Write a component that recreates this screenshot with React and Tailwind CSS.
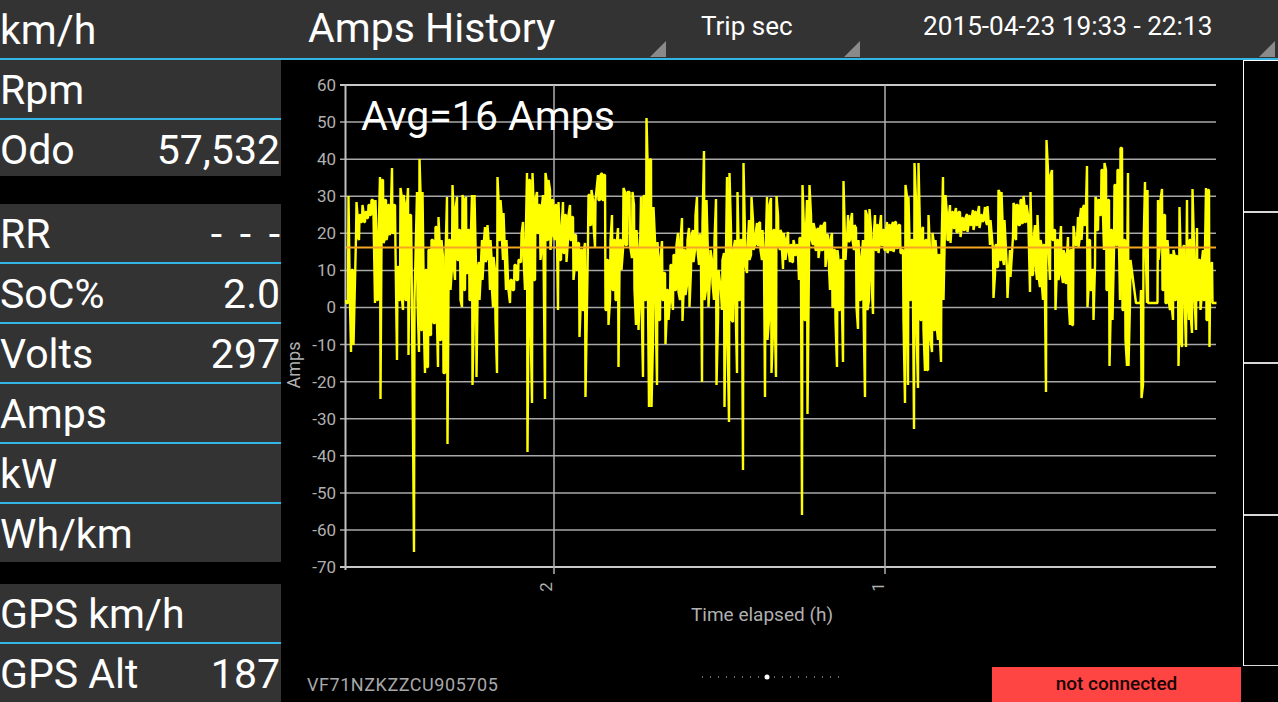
import React from "react";

// traced from the screenshot: [x, top, bottom] in page pixels
const TRACE = [
  [346,300,303],[348,196,303],[351,270,352],[353,270,345],[356,202,237],[359,215,240],[362,205,222],[365,212,222],[368,205,218],[371,200,215],[375,200,303],
  [378,240,300],[380,177,399],[383,180,243],[386,200,240],[389,205,235],[392,168,233],[395,205,250],[397,267,360],[400,188,300],[403,195,310],[405,205,300],[408,188,355],
  [411,215,253],[414,300,552],[417,192,300],[419,159,352],[422,192,330],[425,270,373],[428,250,367],[431,240,335],[435,227,323],[438,217,367],[441,240,340],[443,257,373],
  [447,197,444],[450,240,290],[452,185,267],[455,210,280],[457,197,260],[460,230,300],[462,195,307],[465,200,290],[466,197,273],[469,230,300],[472,195,385],[474,195,310],[476,267,377],
  [479,262,300],[482,240,280],[485,227,262],[487,225,258],[490,240,290],[493,257,307],[495,270,320],[497,177,373],[500,200,240],[503,213,260],[506,240,290],[510,280,303],
  [514,265,290],[518,260,280],[521,235,262],[523,222,255],[525,250,290],[527,173,452],[530,180,320],[532,173,403],[535,200,280],[537,192,233],[540,205,260],[543,195,250],[545,173,399],
  [548,180,240],[550,190,250],[553,200,235],[555,205,240],[558,202,310],[561,230,260],[563,202,253],[566,215,262],[570,205,240],[573,217,280],[576,235,270],[579,243,337],
  [582,250,310],[585,243,397],[588,195,240],[591,190,225],[595,200,247],[598,175,200],[602,173,200],[605,175,310],[608,260,325],[610,240,300],[612,215,290],[615,240,300],
  [618,228,367],[621,240,270],[623,188,250],[627,192,245],[632,192,258],[634,205,290],[636,230,325],[638,253,330],[641,197,300],[643,196,377],[646,118,300],[649,160,407],[651,159,407],
  [653,207,340],[655,240,300],[657,242,385],[660,260,320],[662,241,300],[665,273,344],[668,290,320],[670,265,300],[673,255,310],[676,245,290],[678,233,292],[680,240,300],[682,218,321],
  [685,250,295],[687,240,285],[689,228,307],[691,235,270],[693,230,262],[695,215,250],[697,197,250],[699,235,265],[702,223,382],[704,151,300],[706,200,290],[708,257,307],[710,250,275],
  [712,260,283],[714,240,300],[716,199,385],[718,270,320],[720,283,285],[722,260,310],[724,253,407],[727,177,330],[729,173,422],[731,230,320],[733,250,322],[735,240,300],[737,192,373],
  [740,240,300],[743,163,470],[745,235,265],[747,250,273],[749,220,260],[751,197,255],[753,220,250],[755,235,245],[757,223,245],[760,222,250],[762,230,260],[765,255,397],[767,197,340],
  [769,205,320],[771,198,373],[773,230,330],[776,196,377],[778,215,245],[780,230,250],[783,233,269],[785,240,260],[788,232,250],[790,245,262],[793,240,262],[796,245,255],[799,238,280],
  [802,185,515],[804,230,320],[807,200,414],[809,185,260],[811,215,240],[813,223,245],[815,230,250],[818,228,258],[821,225,250],[825,222,267],[828,235,255],[830,240,290],[832,233,307],
  [835,250,320],[837,250,367],[840,260,310],[843,181,362],[845,240,260],[848,215,242],[850,222,240],[852,213,240],[854,225,250],[856,228,307],[858,240,329],[861,260,300],[863,240,310],
  [865,210,397],[867,215,310],[869,209,300],[871,230,280],[873,240,314],[875,215,250],[878,225,253],[881,215,245],[884,230,250],[887,222,253],[890,225,250],[893,222,252],[896,222,248],
  [900,225,253],[903,250,320],[905,185,403],[907,197,340],[908,197,385],[911,240,300],[914,163,429],[916,200,330],[918,163,388],[920,230,320],[923,227,330],[925,240,371],[928,215,370],
  [930,250,340],[932,233,352],[935,240,330],[938,255,340],[941,250,362],[943,177,300],[945,195,225],[947,215,240],[950,205,243],[953,212,228],[956,208,232],[960,212,237],[963,218,230],
  [967,214,232],[970,216,225],[973,210,230],[976,212,225],[979,206,228],[982,215,222],[985,207,220],[987,206,225],[990,220,245],[993,250,298],[995,245,275],[998,190,267],[1001,192,260],
  [1004,220,265],[1007,270,298],[1010,250,277],[1013,203,237],[1016,205,240],[1020,200,225],[1023,196,223],[1026,205,222],[1028,215,228],[1030,192,292],[1033,240,275],[1035,225,265],
  [1037,215,280],[1040,240,287],[1043,245,300],[1046,140,392],[1048,170,250],[1050,175,280],[1052,170,240],[1055,230,310],[1058,240,280],[1061,226,273],[1063,250,283],[1065,255,283],
  [1068,237,300],[1070,250,325],[1073,226,325],[1075,240,245],[1078,217,247],[1081,208,240],[1084,205,225],[1087,166,307],[1090,240,290],[1093,270,320],[1095,197,265],[1098,200,230],
  [1101,170,215],[1104,163,250],[1106,170,290],[1109,200,366],[1112,230,320],[1114,185,250],[1117,170,245],[1120,148,300],[1122,148,310],[1125,240,340],[1127,225,366],[1128,173,366],
  [1130,260,303],[1136,303,303],[1140,303,303],[1141,290,398],[1143,250,385],[1145,182,240],[1147,190,303],[1148,303,303],[1157,303,303],[1158,200,260],[1160,200,245],[1162,189,290],
  [1165,215,303],[1167,240,303],[1170,255,310],[1173,250,320],[1176,255,300],[1178,260,366],[1179,207,340],[1182,250,347],[1184,245,300],[1186,255,347],[1187,200,290],[1189,240,320],
  [1192,189,333],[1194,245,300],[1196,260,330],[1197,228,300],[1200,260,310],[1203,250,300],[1206,188,320],[1209,190,347],[1210,267,300],[1212,262,303],[1213,303,303],[1216,303,303],
];

// the real line runs many samples per pixel, so fill the overlap between two wider columns
const columns = TRACE.flatMap((col, i) => {
  const next = TRACE[i + 1];
  if (!next) return [col];
  const top = Math.max(col[1], next[1]);
  const bottom = Math.min(col[2], next[2]);
  if (bottom <= top || next[0] - col[0] < 3) return [col];
  return [col, [(col[0] + next[0]) / 2, top, bottom]];
});

const points = columns
  .flatMap(([x, top, bottom], i) =>
    i % 2 === 0 ? [[x, top], [x + 0.5, bottom]] : [[x, bottom], [x + 0.5, top]]
  )
  .map((p) => p.join(","))
  .join(" ");

const TICKS = [60, 50, 40, 30, 20, 10, 0, -10, -20, -30, -40, -50, -60, -70];
const tickY = (i) => 85 + i * 37.08;

const Row = ({ label, value, line, short }) => (
  <div
    className={`${short ? "h-[58px]" : "h-[60px]"} bg-[#333333] flex items-center justify-between pt-[3px] pr-px text-[41px] leading-none text-white ${
      line ? "border-b-2 border-[#33b5e5]" : ""
    }`}
  >
    <span>{label}</span>
    {value && <span className="[word-spacing:7.5px]">{value}</span>}
  </div>
);

const Corner = () => (
  <svg width="16" height="16" viewBox="0 0 16 16" className="absolute bottom-[1px] right-[3px]">
    <path d="M16 0V16H0Z" fill="#8a8a8a" />
  </svg>
);

const Chart = () => (
  <svg width="962" height="607" viewBox="281 60 962 607" className="block">
    {TICKS.map((t, i) => (
      <g key={t}>
        <line
          x1="340"
          x2="1216"
          y1={tickY(i)}
          y2={tickY(i)}
          stroke={i === 0 || i === 13 ? "#c8c8c8" : "#a8a8a8"}
          strokeWidth={i === 0 || i === 13 ? 2 : 1.5}
        />
        <text x="336" y={tickY(i) + 6} textAnchor="end" fontSize="17" fill="#b0b0b0">
          {t}
        </text>
      </g>
    ))}
    <line x1="345.5" x2="345.5" y1="84" y2="570" stroke="#c0c0c0" strokeWidth="2" />
    <line x1="554" x2="554" y1="85" y2="574" stroke="#b0b0b0" strokeWidth="1.5" />
    <line x1="885" x2="885" y1="85" y2="574" stroke="#b0b0b0" strokeWidth="1.5" />
    <polyline points={points} fill="none" stroke="#ffff00" strokeWidth="2.4" strokeLinejoin="bevel" />
    <line x1="346" x2="1216" y1="247.5" y2="247.5" stroke="#f5a623" strokeWidth="2" />
    <text transform="translate(300 365) rotate(-90)" textAnchor="middle" fontSize="18" fill="#b0b0b0">
      Amps
    </text>
    <text transform="translate(552 587) rotate(-90)" textAnchor="middle" fontSize="17" fill="#b0b0b0">
      2
    </text>
    <text transform="translate(884 587) rotate(-90)" textAnchor="middle" fontSize="17" fill="#b0b0b0">
      1
    </text>
    <text x="762" y="621" textAnchor="middle" fontSize="19" fill="#b0b0b0">
      Time elapsed (h)
    </text>
  </svg>
);

export default function App() {
  return (
    <div className="w-[1278px] h-[702px] overflow-hidden bg-black flex flex-col font-['Roboto',sans-serif]">
      {/* top bar */}
      <div className="h-[60px] shrink-0 flex bg-[#333333] border-b-2 border-[#33b5e5] text-white">
        <div className="w-[281px] pt-[2px] flex items-center text-[41px] leading-none">km/h</div>
        <div className="relative w-[388px] pl-[27px] pb-[2px] flex items-center text-[41px] leading-none">
          Amps History
          <Corner />
        </div>
        <div className="relative w-[194px] pl-[32px] pb-[6px] flex items-center text-[26px] leading-none">
          Trip sec
          <Corner />
        </div>
        <div className="relative flex-1 pl-[60px] pb-[6px] flex items-center text-[26.2px] leading-none">
          2015-04-23 19:33 - 22:13
          <Corner />
        </div>
      </div>

      <div className="flex-1 flex min-h-0">
        {/* left values */}
        <div className="w-[281px] shrink-0 flex flex-col">
          <Row label="Rpm" line />
          <div className="h-[56px] bg-[#333333] flex items-center justify-between pt-[4px] pr-px text-[41px] leading-none text-white">
            <span>Odo</span>
            <span>57,532</span>
          </div>
          <div className="h-[28px]" />
          <Row label="RR" value="- - -" line />
          <Row label="SoC%" value="2.0" line />
          <Row label="Volts" value="297" line />
          <Row label="Amps" line />
          <Row label="kW" line />
          <Row label="Wh/km" short />
          <div className="h-[22px]" />
          <Row label="GPS km/h" line />
          <Row label="GPS Alt" value="187" short />
        </div>

        {/* chart */}
        <div className="flex-1 flex flex-col min-w-0">
          <div className="relative h-[607px]">
            <Chart />
            <div className="absolute left-[80px] top-[34px] text-[41px] leading-[44px] text-white">
              Avg=16 Amps
            </div>
          </div>
          <div className="flex-1 flex items-end">
            <div className="w-[421px] pl-[26px] pb-[7px] text-[18px] leading-5 tracking-[0.55px] text-[#a8a8a8]">
              VF71NZKZZCU905705
            </div>
            <svg width="140" height="10" viewBox="0 0 140 10" className="self-start mt-[5px]">
              {Array.from({ length: 18 }).map((_, i) =>
                i === 8 ? (
                  <circle key={i} cx={i * 8 + 1} cy="5" r="2.5" fill="#ffffff" />
                ) : (
                  <rect key={i} x={i * 8} y="4.5" width="1" height="1" fill="#cccccc" />
                )
              )}
            </svg>
            <div className="ml-auto mr-[2px] w-[249px] h-[35px] bg-[#ff4444] flex items-center justify-center text-[19px] font-medium text-[#1a0505]">
              not connected
            </div>
          </div>
        </div>

        {/* right side slots */}
        <div className="w-[35px] shrink-0 h-[606px] flex flex-col border-l border-white">
          <div className="flex-1 border-t border-white" />
          <div className="flex-1 border-t-2 border-[#d8d8d8]" />
          <div className="flex-1 border-t-2 border-[#d8d8d8]" />
          <div className="flex-1 border-t-2 border-b border-[#d8d8d8]" />
        </div>
      </div>
    </div>
  );
}
